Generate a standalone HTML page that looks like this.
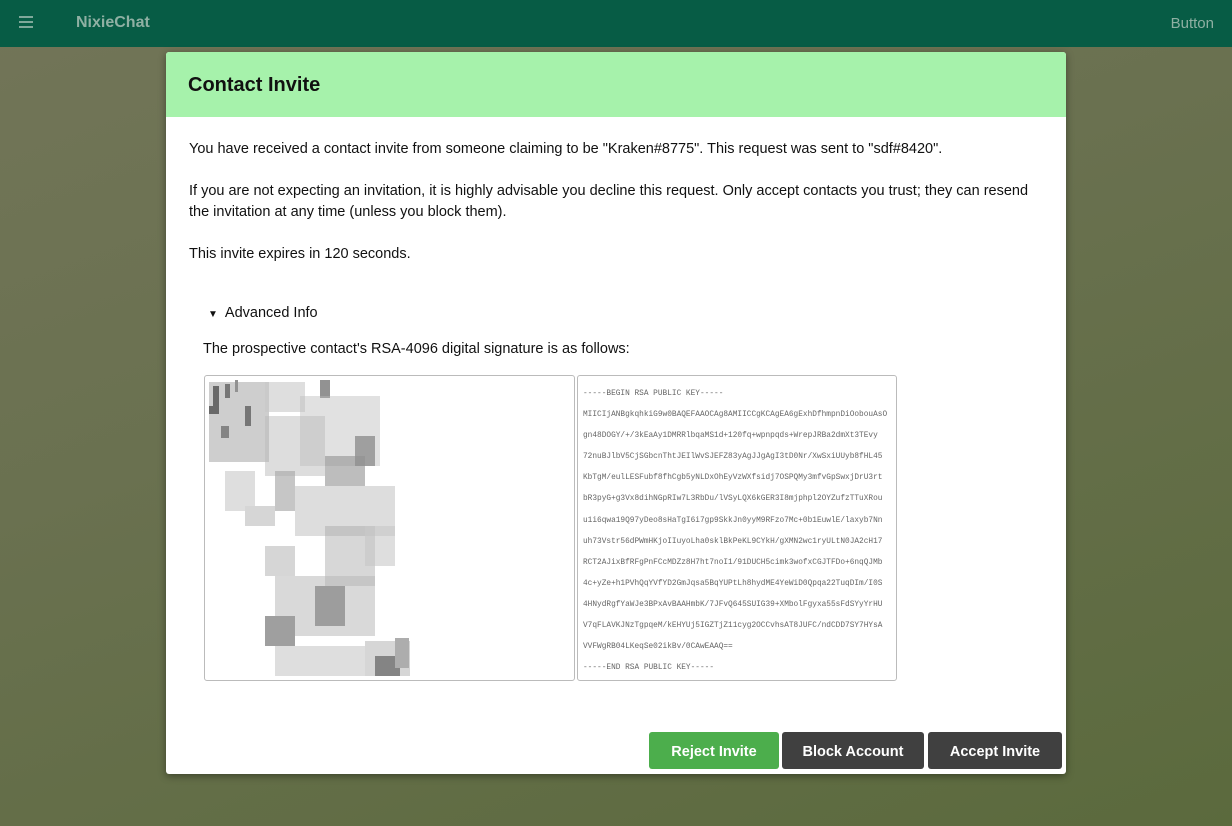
<!DOCTYPE html>
<html><head><meta charset="utf-8"><style>
*{margin:0;padding:0;box-sizing:border-box}
body{width:1232px;height:826px;overflow:hidden;font-family:"Liberation Sans",sans-serif;background:linear-gradient(160deg,#727558 0%,#6a7150 40%,#5b6a3d 100%);position:relative}
.top{position:absolute;left:0;top:0;width:1232px;height:47px;background:#075c45}
.ham{position:absolute;left:19px;top:16px;width:14px;}
.ham i{display:block;height:2px;background:#7fa89a;margin-bottom:3px}
.brand{position:absolute;left:76px;top:14px;color:#8fb0a3;font-size:16px;font-weight:bold}
.btn0{position:absolute;right:18px;top:15px;color:#8fb0a3;font-size:15px}
.modal{position:absolute;left:166px;top:52px;width:900px;height:722px;background:#fff;border-radius:3px;box-shadow:0 2px 8px rgba(0,0,0,.4);overflow:hidden}
.hd{height:65px;background:#a6f2ab;padding:22px 22px;font-size:20px;font-weight:bold;color:#111}
.p{position:absolute;left:23px;font-size:14.5px;color:#111;line-height:21px}
.box{position:absolute;top:323px;height:306px;border:1px solid #bbb;border-radius:3px;background:#fff}
.key{font-family:"Liberation Mono",monospace;font-size:7.8px;color:#666;line-height:21.1px;padding:8px 0 0 5px;white-space:pre}
.b{position:absolute;top:680px;height:37px;border-radius:3px;color:#fff;font-size:14.5px;font-weight:bold;text-align:center;line-height:40px}
</style></head><body>
<div class="top"><div class="ham"><i></i><i></i><i></i></div><div class="brand">NixieChat</div><div class="btn0">Button</div></div>
<div class="modal">
<div class="hd">Contact Invite</div>
<div class="p" style="top:87px">You have received a contact invite from someone claiming to be "Kraken#8775". This request was sent to "sdf#8420".</div>
<div class="p" style="top:129px;width:850px">If you are not expecting an invitation, it is highly advisable you decline this request. Only accept contacts you trust; they can resend the invitation at any time (unless you block them).</div>
<div class="p" style="top:192px">This invite expires in 120 seconds.</div>
<div class="p" style="top:251px;left:42px"><span style="font-size:10px;margin-right:7px">▼</span>Advanced Info</div>
<div class="p" style="top:287px;left:37px">The prospective contact's RSA-4096 digital signature is as follows:</div>
<div class="box" style="left:38px;width:371px">
<svg width="371" height="306" fill="#777">
<g opacity=".8">
<rect x="4" y="6" width="60" height="80" fill="#999" opacity=".6"/>
<rect x="8" y="10" width="6" height="20" fill="#444"/><rect x="20" y="8" width="5" height="14" fill="#555"/><rect x="30" y="4" width="3" height="12"/>
<rect x="4" y="30" width="10" height="8" fill="#444"/><rect x="40" y="30" width="6" height="20" fill="#555"/><rect x="16" y="50" width="8" height="12" fill="#666"/>
<rect x="60" y="6" width="40" height="30" fill="#bbb" opacity=".6"/><rect x="60" y="40" width="60" height="60" fill="#aaa" opacity=".5"/>
<rect x="115" y="4" width="10" height="18" fill="#777"/><rect x="95" y="20" width="80" height="70" fill="#aaa" opacity=".45"/>
<rect x="150" y="60" width="20" height="30" fill="#888"/><rect x="120" y="80" width="40" height="30" fill="#777" opacity=".6"/>
<rect x="20" y="95" width="30" height="40" fill="#bbb" opacity=".6"/><rect x="40" y="130" width="30" height="20" fill="#ccc"/>
<rect x="70" y="95" width="20" height="40" fill="#999" opacity=".7"/><rect x="90" y="110" width="100" height="50" fill="#aaa" opacity=".5"/>
<rect x="120" y="150" width="50" height="60" fill="#999" opacity=".5"/><rect x="160" y="150" width="30" height="40" fill="#bbb" opacity=".6"/>
<rect x="60" y="170" width="30" height="30" fill="#ccc"/><rect x="70" y="200" width="100" height="60" fill="#aaa" opacity=".55"/>
<rect x="110" y="210" width="30" height="40" fill="#666" opacity=".7"/><rect x="60" y="240" width="30" height="30" fill="#888"/>
<rect x="70" y="270" width="90" height="30" fill="#bbb" opacity=".6"/><rect x="160" y="265" width="45" height="35" fill="#aaa" opacity=".6"/>
<rect x="170" y="280" width="25" height="20" fill="#666"/><rect x="190" y="262" width="14" height="30" fill="#999"/>
</g></svg>
</div>
<div class="box" style="left:411px;width:320px"><div class="key">-----BEGIN RSA PUBLIC KEY-----
MIICIjANBgkqhkiG9w0BAQEFAAOCAg8AMIICCgKCAgEA6gExhDfhmpnDiOobouAsO
gn48DOGY/+/3kEaAy1DMRRlbqaMS1d+120fq+wpnpqds+WrepJRBa2dmXt3TEvy
72nuBJlbV5CjSGbcnThtJEIlWvSJEFZ83yAgJJgAgI3tD0Nr/XwSxiUUyb8fHL45
KbTgM/eulLESFubf8fhCgb5yNLDxOhEyVzWXfsidj7OSPQMy3mfvGpSwxjDrU3rt
bR3pyG+g3Vx8dihNGpRIw7L3RbDu/lVSyLQX6kGER3I8mjphpl2OYZufzTTuXRou
u1i6qwa19Q97yDeo8sHaTgI6i7gp9SkkJn0yyM9RFzo7Mc+0b1EuwlE/laxyb7Nn
uh73Vstr56dPWmHKjoIIuyoLha0sklBkPeKL9CYkH/gXMN2wc1ryULtN0JA2cH17
RCT2AJixBfRFgPnFCcMDZz8H7ht7noI1/91DUCH5cimk3wofxCGJTFDo+6nqQJMb
4c+yZe+h1PVhQqYVfYD2GmJqsa5BqYUPtLh8hydME4YeWiD0Qpqa22TuqDIm/I0S
4HNydRgfYaWJe3BPxAvBAAHmbK/7JFvQ645SUIG39+XMbolFgyxa55sFdSYyYrHU
V7qFLAVKJNzTgpqeM/kEHYUj5IGZTjZ11cyg2OCCvhsAT8JUFC/ndCDD7SY7HYsA
VVFWgRB04LKeqSe02ikBv/0CAwEAAQ==
-----END RSA PUBLIC KEY-----</div></div>
<div class="b" style="left:483px;width:130px;background:#4cae4c">Reject Invite</div>
<div class="b" style="left:616px;width:142px;background:#404040">Block Account</div>
<div class="b" style="left:762px;width:134px;background:#404040">Accept Invite</div>
</div>
</body></html>
